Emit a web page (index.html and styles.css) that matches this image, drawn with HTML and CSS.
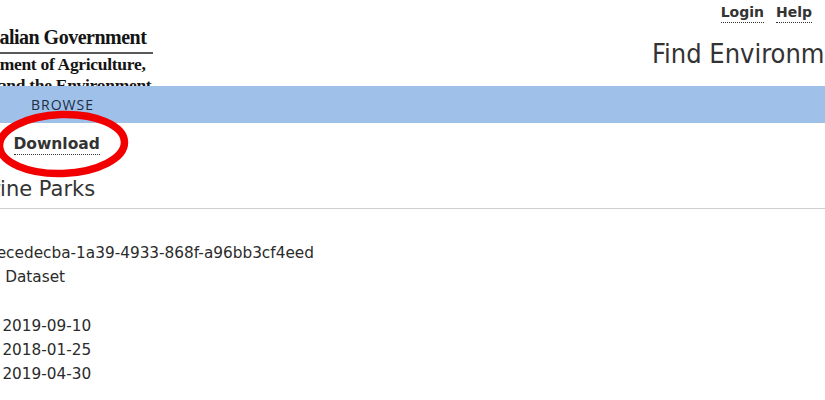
FILE: index.html
```html
<!DOCTYPE html>
<html lang="en">
<head>
<meta charset="utf-8">
<title>Marine Parks</title>
<link rel="stylesheet" href="styles.css">
</head>
<body>
<div class="page">
  <header class="header">
    <div class="logo">
      <div class="logo-line1">Australian Government</div>
      <div class="logo-line2">Department of Agriculture,</div>
      <div class="logo-line2">Water and the Environment</div>
    </div>
    <div class="header-right">
      <nav class="user-links">
        <a class="user-link" href="#">Login</a>
        <a class="user-link" href="#">Help</a>
      </nav>
      <div class="site-title">Find Environmental Data</div>
    </div>
  </header>
  <div class="navbar"><span class="nav-item">BROWSE</span></div>
  <div class="actions">
    <a class="download" href="#">Download</a>
    <svg class="circle" width="140" height="76" viewBox="0 0 140 76" aria-hidden="true">
      <ellipse cx="70" cy="36" rx="62.5" ry="29.5" fill="none" stroke="#f20000" stroke-width="7.5" transform="rotate(-2 70 36)"/>
    </svg>
  </div>
  <h1 class="title">Marine Parks</h1>
  <hr class="rule">
  <div class="meta">
    <div class="row val-id">ecedecba-1a39-4933-868f-a96bb3cf4eed</div>
    <div class="row val-type">Dataset</div>
    <div class="dates">
      <div class="row val-date">2019-09-10</div>
      <div class="row val-date">2018-01-25</div>
      <div class="row val-date">2019-04-30</div>
    </div>
  </div>
</div>
</body>
</html>
```
FILE: styles.css
```css
html, body {
  margin: 0;
  padding: 0;
  background: #fff;
}
body {
  width: 825px;
  height: 400px;
  overflow: hidden;
  font-family: "DejaVu Sans", Verdana, sans-serif;
  color: #2b2b2b;
}
.page {
  width: 825px;
  overflow: hidden;
}
.header {
  display: grid;
  grid-template-columns: 652px 173px;
  height: 86px;
  overflow: hidden;
}
.logo {
  margin-left: -47px;
  width: 200px;
  padding-top: 27px;
  font-family: "Liberation Serif", "Times New Roman", serif;
  font-weight: bold;
  color: #141414;
  white-space: nowrap;
}
.logo-line1 {
  font-size: 20px;
  line-height: 21px;
  letter-spacing: -0.5px;
  padding-bottom: 3.5px;
  border-bottom: 2px solid #5a5a5a;
}
.logo-line2 {
  font-size: 17.5px;
  line-height: 21px;
  letter-spacing: -0.3px;
  margin-left: -4px;
}
.header-right {
  display: flex;
  flex-direction: column;
  min-width: 0;
}
.user-links {
  display: flex;
  justify-content: flex-end;
  gap: 12px;
  padding: 4px 13px 0 0;
}
.user-link {
  display: inline-block;
  font-size: 14px;
  line-height: 16px;
  font-weight: bold;
  color: #333;
  text-decoration: none;
  padding-bottom: 2px;
  border-bottom: 1px dotted #333;
}
.site-title {
  margin-top: 14.5px;
  font-family: "DejaVu Sans Condensed", "DejaVu Sans", sans-serif;
  font-stretch: condensed;
  font-size: 27px;
  line-height: 31px;
  color: #333;
  white-space: nowrap;
}
.navbar {
  height: 37px;
  box-sizing: border-box;
  padding: 9px 0 9px 31px;
  background: #9fc1e9;
}
.nav-item {
  font-family: "Open Sans", sans-serif;
  font-size: 14px;
  line-height: 19px;
  letter-spacing: 1px;
  color: #1c2d45;
}
.actions {
  position: relative;
  padding: 11px 0 0 13.5px;
}
.download {
  display: inline-block;
  font-size: 15.5px;
  line-height: 17px;
  font-weight: bold;
  color: #333;
  text-decoration: none;
  padding-bottom: 1px;
  border-bottom: 1px dotted #333;
}
.circle {
  position: absolute;
  left: -8px;
  top: -15px;
  z-index: 2;
  overflow: visible;
}
.title {
  margin: 21.5px 0 0 -39.5px;
  font-size: 21px;
  line-height: 25px;
  font-weight: normal;
  color: #333;
  white-space: nowrap;
}
.rule {
  margin: 6.5px 0 0 0;
  border: 0;
  border-top: 1px solid #cfcfcf;
  height: 0;
}
.meta {
  padding-top: 32px;
}
.row {
  font-size: 15.3px;
  line-height: 24px;
  white-space: nowrap;
}
.dates {
  margin-top: 25px;
}
.val-id {
  margin-left: -3.3px;
}
.val-type {
  margin-left: 5.2px;
}
.val-date {
  margin-left: 2.4px;
}
```
